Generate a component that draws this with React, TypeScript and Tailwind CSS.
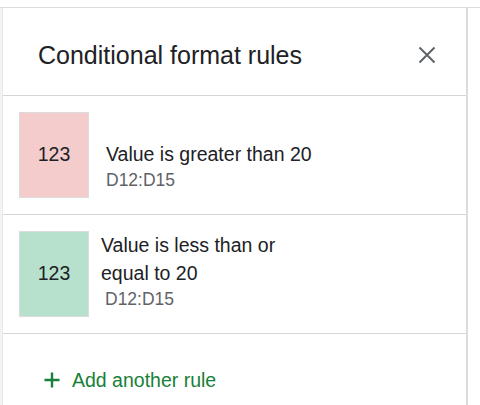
import React from "react";

type Rule = {
  label: string;
  range: string;
  swatch: string;
  textClass: string;
  rangeClass: string;
};

const rules: Rule[] = [
  {
    label: "Value is greater than 20",
    range: "D12:D15",
    swatch: "bg-[#f4cccc]",
    textClass: "pl-[17px] pt-[28px]",
    rangeClass: "",
  },
  {
    label: "Value is less than or equal to 20",
    range: "D12:D15",
    swatch: "bg-[#b7e1cd]",
    textClass: "pl-[12px] pt-0",
    rangeClass: "pl-[4px]",
  },
];

function CloseIcon() {
  return (
    <svg width="18" height="18" viewBox="0 0 18 18" className="text-[#5f6368]">
      <path d="M1.5 1.5 L16.5 16.5 M16.5 1.5 L1.5 16.5" stroke="currentColor" strokeWidth="2" fill="none" />
    </svg>
  );
}

function PlusIcon() {
  return (
    <svg width="16" height="16" viewBox="0 0 16 16" className="text-[#188038]">
      <path d="M8 0.5 V15.5 M0.5 8 H15.5" stroke="currentColor" strokeWidth="2.4" fill="none" />
    </svg>
  );
}

function RuleRow({ rule }: { rule: Rule }) {
  return (
    <div className="flex h-[119px] items-start border-b border-[#d6d6d6] pl-[16px] pt-[16px]">
      <div
        className={`flex h-[86px] w-[70px] shrink-0 items-center justify-center border border-[#dadce0] text-[19.5px] text-[#202124] ${rule.swatch}`}
      >
        123
      </div>
      <div className={rule.textClass}>
        <div className="w-[215px] text-[19.5px] leading-[28px] text-[#202124]">{rule.label}</div>
        <div className={`text-[17.5px] leading-[24px] text-[#5f6368] ${rule.rangeClass}`}>{rule.range}</div>
      </div>
    </div>
  );
}

export default function App() {
  return (
    <div
      className="h-[405px] w-[480px] overflow-hidden bg-white"
      style={{ fontFamily: '"Liberation Sans", Arial, sans-serif' }}
    >
      <div className="h-[8px] border-b border-[#dadce0]" />
      <div className="flex h-[397px]">
        <div className="w-[3px] shrink-0 border-r border-[#e8e8e8] bg-[#f3f3f3]" />
        <div className="w-[463px] shrink-0">
          <div className="flex h-[88px] items-center justify-between border-b border-[#d6d6d6] pl-[35px] pr-[30px] pt-[6px]">
            <h1 className="text-[25px] font-normal leading-[32px] text-[#202124]">Conditional format rules</h1>
            <CloseIcon />
          </div>
          {rules.map((r) => (
            <RuleRow key={r.label} rule={r} />
          ))}
          <div className="flex items-center gap-[12px] pl-[41px] pt-[32px]">
            <PlusIcon />
            <span className="text-[19.5px] leading-[28px] text-[#188038]">Add another rule</span>
          </div>
        </div>
        <div className="w-[2px] shrink-0 bg-[#dadce0]" />
        <div className="flex-1 bg-white" />
      </div>
    </div>
  );
}
